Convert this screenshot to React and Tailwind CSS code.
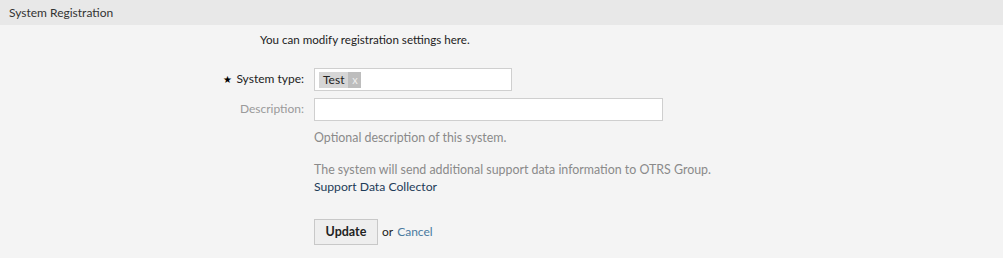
import React from 'react';

const font = { fontFamily: '"Lato", "Liberation Sans", sans-serif' };

function Row({ label, required, muted, children }) {
    return (
        <div className="flex items-start">
            <label
                className={`w-[305px] shrink-0 text-right pr-[1px] leading-[22px] ${muted ? 'text-[#9a9a9a]' : 'text-[#222]'}`}
            >
                {required && <span className="text-[10px] mr-[4px] text-black">★</span>}
                {label}
            </label>
            <div className="ml-[9px]">{children}</div>
        </div>
    );
}

export default function App() {
    return (
        <div className="w-[1003px] h-[258px] bg-[#f4f4f4] text-[12px] text-[#333]" style={font}>
            <div className="h-[25px] bg-[#e8e8e8] flex items-center pl-[9px] text-[12px] text-[#333]">
                System Registration
            </div>

            <p className="pl-[260px] mt-[7px] leading-[16px] text-[11.6px] text-[#222]">
                You can modify registration settings here.
            </p>

            <div className="mt-[20px] flex flex-col gap-[7px]">
                <Row label="System type:" required>
                    <div className="w-[198px] h-[23px] bg-white border border-[#cfcfcf] flex items-center pl-[4px]">
                        <span className="flex items-stretch h-[16px] bg-[#d6d6d6] text-[#222]">
                            <span className="px-[4px] leading-[16px]">Test</span>
                            <span className="w-[13px] bg-[#bdbdbd] text-[#eee] text-[11px] leading-[15px] text-center">x</span>
                        </span>
                    </div>
                </Row>
                <Row label="Description:" muted>
                    <input
                        type="text"
                        className="w-[349px] h-[23px] bg-white border border-[#cfcfcf] outline-none"
                    />
                </Row>
            </div>

            <div className="pl-[314px] mt-[8px] text-[#8a8a8a] text-[12.4px] leading-[17px]">
                <p>Optional description of this system.</p>
                <p className="mt-[15px]">The system will send additional support data information to OTRS Group.</p>
                <a className="text-[#1d3b58] text-[12.2px]">Support Data Collector</a>
            </div>

            <div className="pl-[314px] mt-[24px] flex items-center">
                <button
                    type="button"
                    className="w-[64px] h-[26px] border border-[#c8c8c8] bg-[#eeeeee] font-bold text-[12.5px] text-[#222]"
                >
                    Update
                </button>
                <span className="ml-[4px] text-[#222]">or</span>
                <a className="ml-[4px] text-[#4a7aa0]">Cancel</a>
            </div>
        </div>
    );
}
